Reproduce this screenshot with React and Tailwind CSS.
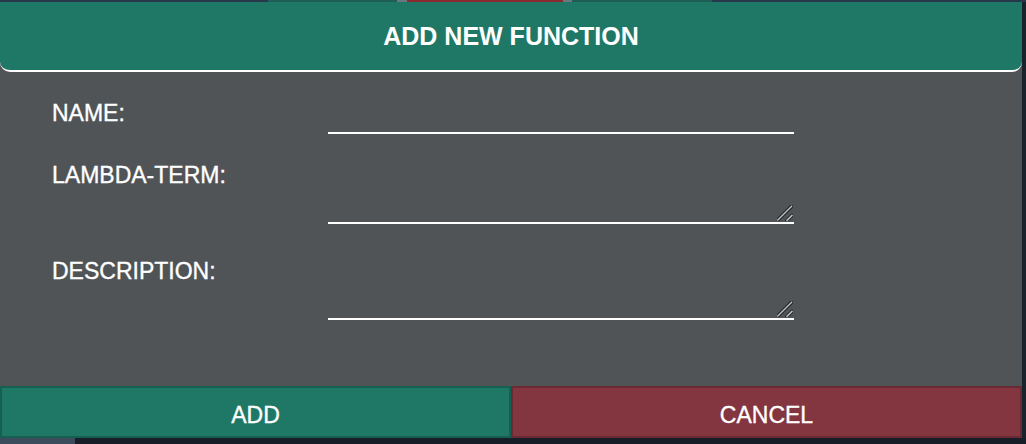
import React from 'react';

const FONT = { fontFamily: '"Liberation Sans", Arial, sans-serif' };

function Grip() {
  return (
    <svg className="absolute right-[1px] bottom-[3px] pointer-events-none" width="16" height="16" viewBox="0 0 16 16">
      <g strokeLinecap="round">
        <line x1="0.8" y1="15" x2="14.7" y2="1.2" stroke="#1b1d1f" strokeWidth="3.4" />
        <line x1="10" y1="15.4" x2="15" y2="10.4" stroke="#1b1d1f" strokeWidth="3.4" />
        <line x1="0.8" y1="15" x2="14.7" y2="1.2" stroke="#b9bbbd" strokeWidth="1.6" />
        <line x1="10" y1="15.4" x2="15" y2="10.4" stroke="#b9bbbd" strokeWidth="1.6" />
      </g>
    </svg>
  );
}

function Field({ label, multiline, className = '' }) {
  return (
    <div className={`flex ${className}`}>
      <label className="w-[276px] shrink-0 text-[23px] leading-[22px] text-white [-webkit-text-stroke:0.35px_white]">{label}</label>
      {multiline ? (
        <div className="relative w-[466px] h-[60px]">
          <textarea className="block w-full h-full resize-none bg-transparent border-0 border-b-2 border-white text-white outline-none" />
          <Grip />
        </div>
      ) : (
        <input className="w-[466px] h-[32px] bg-transparent border-0 border-b-2 border-white text-white outline-none" />
      )}
    </div>
  );
}

export default function App() {
  return (
    <div className="w-[1026px] h-[444px] bg-[#1d2834] flex flex-col overflow-hidden" style={FONT}>
      {/* strip of the page behind the dialog */}
      <div className="h-[2px] flex shrink-0">
        <div className="w-[268px] bg-[#26384a]" />
        <div className="w-[129px] bg-[#1d5f57]" />
        <div className="w-[10px] bg-[#6b7880]" />
        <div className="w-[156px] bg-[#8a2a2e]" />
        <div className="w-[9px] bg-[#6b7880]" />
        <div className="w-[140px] bg-[#1d5f57]" />
        <div className="flex-1 bg-[#26384a]" />
      </div>

      <div className="flex flex-1 min-h-0">
        <div className="w-[1022px] flex flex-col bg-[#505457]">
          <div className="h-[70px] shrink-0 bg-[#1f7866] border-b-2 border-white rounded-b-[10px] flex items-center justify-center pt-[2px]">
            <h2 className="text-[25px] font-bold text-white">ADD NEW FUNCTION</h2>
          </div>

          <div className="flex-1 flex flex-col pl-[52px] pt-[30px]">
            <Field label="NAME:" />
            <Field label="LAMBDA-TERM:" multiline className="mt-[30px]" />
            <Field label="DESCRIPTION:" multiline className="mt-[36px]" />
          </div>

          <div className="h-[52px] shrink-0 flex">
            <button className="flex-1 bg-[#1f7866] border-2 border-[#175f50] text-white text-[23px] pt-[6px] [-webkit-text-stroke:0.35px_white]">ADD</button>
            <button className="flex-1 bg-[#833540] border-2 border-[#6a2a33] text-white text-[23px] pt-[6px] [-webkit-text-stroke:0.35px_white]">CANCEL</button>
          </div>
        </div>
        <div className="flex-1 bg-[#1a222c]" />
      </div>

      <div className="h-[6px] shrink-0 flex">
        <div className="w-[75px] bg-[#3c4c5c]" />
        <div className="flex-1 bg-[#171e27]" />
      </div>
    </div>
  );
}
